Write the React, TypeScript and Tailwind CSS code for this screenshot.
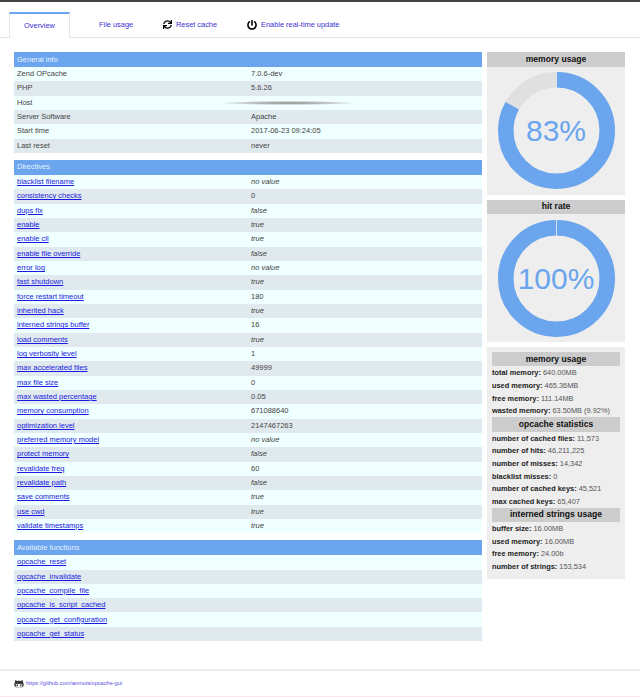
import { FaGithubAlt, FaPowerOff, FaSync } from "react-icons/fa";

const generalInfo = [
  ["Zend OPcache", "7.0.6-dev"],
  ["PHP", "5.6.26"],
  ["Host", ""],
  ["Server Software", "Apache"],
  ["Start time", "2017-06-23 09:24:05"],
  ["Last reset", "never"],
];

const directives = [
  ["blacklist filename", "no value", true],
  ["consistency checks", "0", false],
  ["dups fix", "false", true],
  ["enable", "true", true],
  ["enable cli", "true", true],
  ["enable file override", "false", true],
  ["error log", "no value", true],
  ["fast shutdown", "true", true],
  ["force restart timeout", "180", false],
  ["inherited hack", "true", true],
  ["interned strings buffer", "16", false],
  ["load comments", "true", true],
  ["log verbosity level", "1", false],
  ["max accelerated files", "49999", false],
  ["max file size", "0", false],
  ["max wasted percentage", "0.05", false],
  ["memory consumption", "671088640", false],
  ["optimization level", "2147467263", false],
  ["preferred memory model", "no value", true],
  ["protect memory", "false", true],
  ["revalidate freq", "60", false],
  ["revalidate path", "false", true],
  ["save comments", "true", true],
  ["use cwd", "true", true],
  ["validate timestamps", "true", true],
] as const;

const functions = [
  "opcache_reset",
  "opcache_invalidate",
  "opcache_compile_file",
  "opcache_is_script_cached",
  "opcache_get_configuration",
  "opcache_get_status",
];

const stats = [
  {
    title: "memory usage",
    rows: [
      ["total memory", "640.00MB"],
      ["used memory", "465.36MB"],
      ["free memory", "111.14MB"],
      ["wasted memory", "63.50MB (9.92%)"],
    ],
  },
  {
    title: "opcache statistics",
    rows: [
      ["number of cached files", "11,573"],
      ["number of hits", "46,211,225"],
      ["number of misses", "14,342"],
      ["blacklist misses", "0"],
      ["number of cached keys", "45,521"],
      ["max cached keys", "65,407"],
    ],
  },
  {
    title: "interned strings usage",
    rows: [
      ["buffer size", "16.00MB"],
      ["used memory", "16.00MB"],
      ["free memory", "24.00b"],
      ["number of strings", "153,534"],
    ],
  },
];

function Row({ odd, children }: { odd: boolean; children: React.ReactNode }) {
  return (
    <div className={`flex h-[14.33px] items-center pl-[3px] text-[7.5px] leading-[14px] text-[#444] ${odd ? "bg-[#f0ffff]" : "bg-[#e0eaee]"}`}>
      {children}
    </div>
  );
}

function SectionHead({ title }: { title: string }) {
  return <div className="flex h-[15px] items-center bg-[#6aa5ee] pl-[3px] text-[7.5px] leading-[14px] text-[#e8f2ff]">{title}</div>;
}

function Donut({ title, value }: { title: string; value: number }) {
  const r = 50.75;
  const circ = 2 * Math.PI * r;
  const dash = (value / 100) * circ;
  return (
    <div className="h-[142.5px] bg-[#eeeeee]">
      <div className="flex h-[14.5px] items-center justify-center bg-[#cccccc] text-[8.6px] font-bold text-[#111]">{title}</div>
      <div className="relative mx-auto mt-[5.5px] h-[117px] w-[117px]">
        <svg width="117" height="117" viewBox="0 0 117 117">
          <circle cx="58.5" cy="58.5" r={r} fill="none" stroke="#e0e0e0" strokeWidth="15.5" />
          <circle
            cx="58.5"
            cy="58.5"
            r={r}
            fill="none"
            stroke="#6aa5ee"
            strokeWidth="15.5"
            strokeDasharray={`${dash} ${circ}`}
            transform="rotate(-90 58.5 58.5)"
          />
          <line x1="58.5" y1="0" x2="58.5" y2="16" stroke="#eeeeee" strokeWidth="0.8" />
        </svg>
        <div className="absolute inset-0 flex items-center justify-center text-[30px] text-[#6aa5ee]">{value}%</div>
      </div>
    </div>
  );
}

export default function App() {
  return (
    <div className="flex min-h-[697px] flex-col bg-white font-['Liberation_Sans',Arial,sans-serif]">
      <div className="h-[2px] bg-[#444444]" />

      <nav className="mt-[10px] flex h-[26px] items-stretch border-b border-[#e5e5e5] pl-[9px] text-[7.4px] text-[#3a30d0]">
        <div className="-mb-px flex w-[61px] items-center justify-center border-x border-t-2 border-x-[#e5e5e5] border-t-[#6aa5ee] bg-white">
          Overview
        </div>
        <div className="flex w-[90px] items-center pl-[29px]">File usage</div>
        <div className="flex w-[87px] items-center gap-[4px] pl-[3px]">
          <FaSync className="h-[9px] w-[9px] text-black" />
          Reset cache
        </div>
        <div className="flex items-center gap-[4px]">
          <FaPowerOff className="h-[10px] w-[10px] text-black" />
          Enable real-time update
        </div>
      </nav>

      <main className="mt-[14px] flex gap-[5px] pl-[14px]">
        <div className="flex w-[468px] flex-col gap-[7px]">
          <section>
            <SectionHead title="General info" />
            {generalInfo.map(([label, value], i) => (
              <Row key={label} odd={i % 2 === 0}>
                <span className="w-[234px] shrink-0">{label}</span>
                {label === "Host" ? (
                  <div className="-ml-[30px] h-[4px] w-[135px] bg-[radial-gradient(ellipse_at_center,#8a8a8a_0%,#c4c8c8_45%,transparent_72%)]" />
                ) : (
                  <span>{value}</span>
                )}
              </Row>
            ))}
          </section>

          <section>
            <SectionHead title="Directives" />
            {directives.map(([label, value, italic], i) => (
              <Row key={label} odd={i % 2 === 0}>
                <a className="w-[234px] shrink-0 text-[#1a1ae0] underline">{label}</a>
                <span className={italic ? "italic" : ""}>{value}</span>
              </Row>
            ))}
          </section>

          <section>
            <SectionHead title="Available functions" />
            {functions.map((name, i) => (
              <Row key={name} odd={i % 2 === 0}>
                <a className="text-[#1a1ae0] underline">{name}</a>
              </Row>
            ))}
          </section>
        </div>

        <aside className="flex w-[138px] flex-col gap-[5px]">
          <Donut title="memory usage" value={83} />
          <Donut title="hit rate" value={100} />
          <div className="h-[232px] bg-[#eeeeee] px-[5px] pt-[5px]">
            {stats.map((group) => (
              <div key={group.title}>
                <div className="flex h-[14.4px] items-center justify-center bg-[#cccccc] text-[8.6px] font-bold text-[#111]">
                  {group.title}
                </div>
                {group.rows.map(([label, value]) => (
                  <div key={label} className="h-[12.7px] whitespace-pre pt-[1px] text-[7.4px] leading-[12.7px] text-[#555]">
                    <b className="text-[#222]">{label}:</b> {value}
                  </div>
                ))}
              </div>
            ))}
          </div>
        </aside>
      </main>

      <footer className="mt-auto flex h-[28px] items-center gap-[2px] border-t-2 border-b border-t-[#eeeeee] border-b-[#fbe9e4] pl-[14px] text-[5.6px] text-[#5a50e0]">
        <FaGithubAlt className="h-[10px] w-[10px] text-[#333]" />
        <a>https://github.com/amnuts/opcache-gui</a>
      </footer>
    </div>
  );
}
